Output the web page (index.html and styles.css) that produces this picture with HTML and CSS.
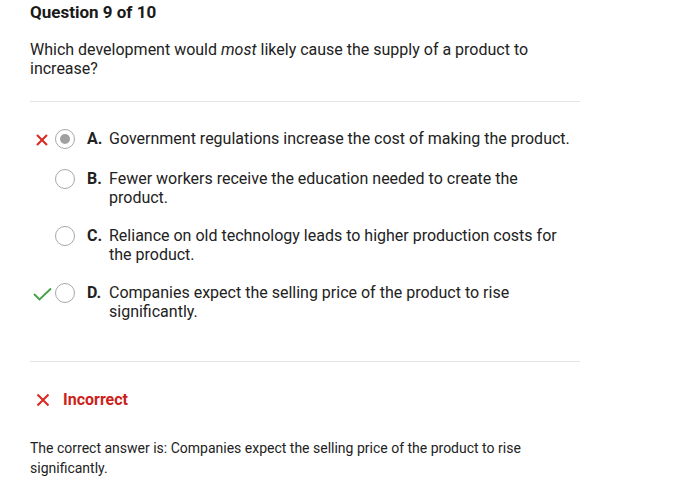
FILE: index.html
```html
<!DOCTYPE html>
<html>
<head>
<meta charset="utf-8">
<link rel="stylesheet" href="styles.css">
</head>
<body>
<div class="page">
  <h1 class="title">Question 9 of 10</h1>
  <p class="question">Which development would <em>most</em> likely cause the supply of a product to increase?</p>
  <hr class="divider">
  <ul class="options">
    <li class="option">
      <span class="mark"><svg width="12" height="12" viewBox="0 0 12 12"><path d="M1 1 L11 11 M11 1 L1 11" stroke="#d9281f" stroke-width="2" fill="none"/></svg></span>
      <span class="radio checked"></span>
      <span class="letter">A.</span>
      <span class="text">Government regulations increase the cost of making the product.</span>
    </li>
    <li class="option">
      <span class="mark"></span>
      <span class="radio"></span>
      <span class="letter">B.</span>
      <span class="text">Fewer workers receive the education needed to create the product.</span>
    </li>
    <li class="option">
      <span class="mark"></span>
      <span class="radio"></span>
      <span class="letter">C.</span>
      <span class="text">Reliance on old technology leads to higher production costs for the product.</span>
    </li>
    <li class="option">
      <span class="mark check"><svg width="19" height="14" viewBox="0 0 19 14"><path d="M1 7 L6.5 12.5 L18 1.5" stroke="#43a047" stroke-width="1.8" fill="none"/></svg></span>
      <span class="radio"></span>
      <span class="letter">D.</span>
      <span class="text">Companies expect the selling price of the product to rise significantly.</span>
    </li>
  </ul>
  <hr class="divider second">
  <div class="result">
    <svg width="14" height="14" viewBox="0 0 14 14"><path d="M1.5 1.5 L12.5 12.5 M12.5 1.5 L1.5 12.5" stroke="#d9281f" stroke-width="2" fill="none"/></svg>
    <span class="result-label">Incorrect</span>
  </div>
  <p class="answer">The correct answer is: Companies expect the selling price of the product to rise significantly.</p>
</div>
</body>
</html>
```

FILE: styles.css
```css
* { box-sizing: border-box; }
body {
  margin: 0;
  background: #fff;
  font-family: Roboto, "Noto Sans", sans-serif;
  color: #222;
}
.page {
  padding: 2px 0 0 30px;
  width: 580px;
}
.title {
  margin: 0;
  font-size: 17px;
  font-weight: 700;
  line-height: 20px;
  color: #1a1a1a;
}
.question {
  margin: 18px 0 0;
  font-size: 16px;
  line-height: 19px;
  padding-right: 20px;
}
.divider {
  border: 0;
  border-top: 1px solid #e4e4e4;
  margin: 23px 0 0;
}
.options {
  list-style: none;
  margin: 27px 0 0;
  padding: 0;
  display: flex;
  flex-direction: column;
  gap: 19px;
}
.option {
  display: flex;
  align-items: flex-start;
  font-size: 16px;
  line-height: 19px;
  min-height: 21px;
}
.mark {
  width: 24px;
  height: 19px;
  padding-left: 6px;
  display: flex;
  align-items: center;
  flex-shrink: 0;
}
.mark.check { padding-left: 3px; }
.mark svg { margin-top: 3px; }
.radio {
  width: 20px;
  height: 20px;
  margin-left: 1px;
  border: 1.5px solid #a8a8a8;
  border-radius: 50%;
  flex-shrink: 0;
  position: relative;
}
.radio.checked::after {
  content: "";
  position: absolute;
  left: 3.5px; top: 3.5px;
  width: 10px; height: 10px;
  border-radius: 50%;
  background: #a0a0a0;
}
.letter {
  font-weight: 700;
  width: 22px;
  margin-left: 12px;
  flex-shrink: 0;
}
.text {
  flex: 1;
}
.divider.second {
  margin-top: 40px;
}
.result {
  margin-top: 28px;
  display: flex;
  align-items: center;
  gap: 13px;
  padding-left: 6px;
}
.result-label {
  color: #cc1f1a;
  font-weight: 700;
  font-size: 16px;
}
.answer {
  margin: 29px 0 0;
  font-size: 14px;
  line-height: 20px;
  padding-right: 40px;
}
```
